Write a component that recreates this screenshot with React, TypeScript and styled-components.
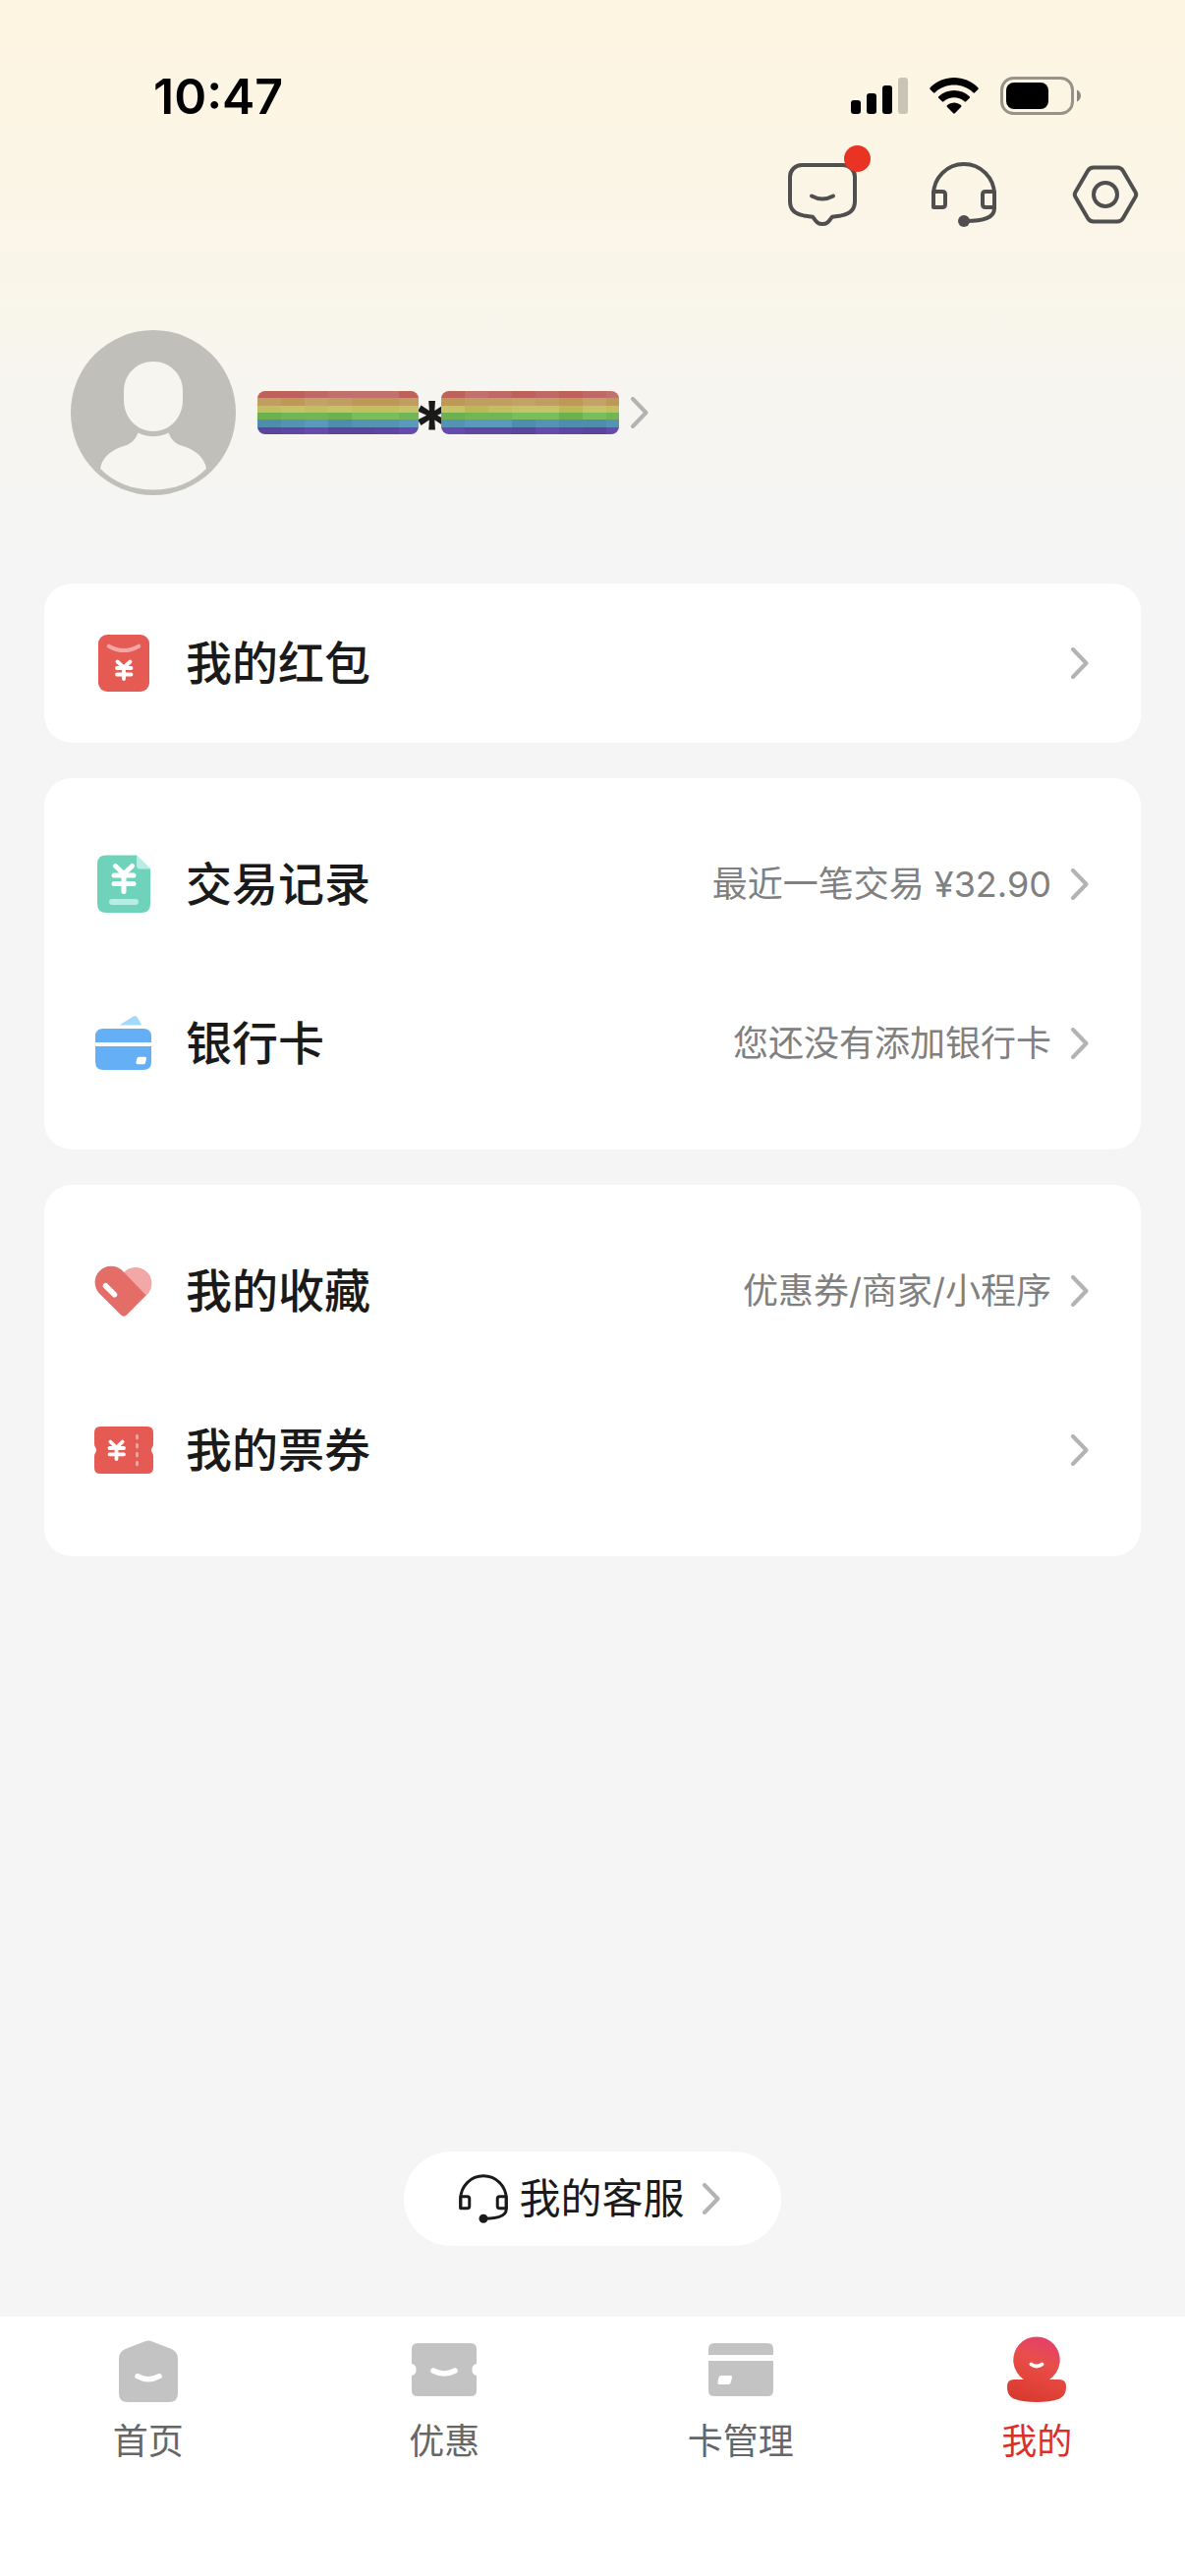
import React from "react";
import styled, { createGlobalStyle } from "styled-components";

const GlobalStyle = createGlobalStyle`
  *, *::before, *::after { box-sizing: border-box; }
  html, body { margin: 0; padding: 0; }
  body {
    background: #f5f5f5;
    font-family: Inter, "Noto Sans CJK SC", sans-serif;
    color: #1a1a1a;
  }
  a { color: inherit; text-decoration: none; }
  button { font: inherit; color: inherit; border: 0; background: none; padding: 0; cursor: pointer; }
  svg { display: block; flex: none; }
`;

const Page = styled.div`
  display: flex;
  flex-direction: column;
  min-height: 100vh;
  background: linear-gradient(180deg, #fef5e1 0, #f9f6ea 300px, #f7f5f0 400px, #f5f5f5 570px);
`;

const StatusBar = styled.div`
  display: flex;
  align-items: center;
  justify-content: space-between;
  padding: 62px 105px 28px 156px;
`;

const Clock = styled.time`
  font-size: 50px;
  line-height: 72px;
  font-weight: 600;
  color: #000;
`;

const StatusIcons = styled.div`
  display: flex;
  align-items: center;
  gap: 22px;
`;

const Toolbar = styled.header`
  display: flex;
  justify-content: flex-end;
  gap: 72px;
  padding: 0 45px;
`;

const ToolButton = styled.button`
  position: relative;
  width: 72px;
  height: 72px;
  color: #4f4f4f;
`;

const Dot = styled.span`
  position: absolute;
  top: -14px;
  right: -13px;
  width: 27px;
  height: 27px;
  border-radius: 50%;
  background: #e93323;
`;

const Profile = styled.a`
  display: flex;
  align-items: center;
  align-self: flex-start;
  gap: 22px;
  margin: 102px 72px 90px;
`;

const NameLine = styled.span`
  display: flex;
  align-items: center;
  gap: 12px;
`;

const MaskedName = styled.span`
  display: flex;
  align-items: flex-end;

  svg { z-index: 1; }
`;

const Star = styled.span`
  display: flex;
  justify-content: center;
  width: 23px;
  height: 44px;
  padding-left: 4px;
  font-size: 72px;
  line-height: 72px;
  font-weight: 700;
`;

const Main = styled.main`
  display: flex;
  flex-direction: column;
  gap: 36px;
  padding: 0 45px;
`;

const Card = styled.section<{ $roomy?: boolean }>`
  padding: ${(p) => (p.$roomy ? "27px 0" : "0")};
  border-radius: 28px;
  background: #fff;
`;

const Row = styled.a`
  display: flex;
  align-items: center;
  height: 162px;
  padding: 0 53px 0 51px;
`;

const RowTitle = styled.span`
  flex: 1;
  margin-left: 33px;
  font-size: 47px;
  line-height: 66px;
  font-weight: 500;
`;

const RowNote = styled.span`
  margin-right: 20px;
  font-size: 36px;
  line-height: 50px;
  color: #808080;
`;

const ServiceButton = styled.button`
  display: flex;
  align-items: center;
  align-self: center;
  height: 96px;
  margin: auto 0 72px;
  padding: 0 62px 0 54px;
  border-radius: 48px;
  background: #fff;
`;

const ServiceText = styled.span`
  margin: 0 18px 0 9px;
  font-size: 42px;
  line-height: 60px;
`;

const TabBar = styled.nav`
  display: grid;
  grid-template-columns: repeat(4, 1fr);
  height: 264px;
  padding-top: 18px;
  background: #fff;
`;

const Tab = styled.a<{ $active?: boolean }>`
  display: flex;
  flex-direction: column;
  align-items: center;
  gap: 12px;
  font-size: 36px;
  line-height: 50px;
  color: ${(p) => (p.$active ? "#d9302a" : "#666")};
`;

const Chevron = () => (
  <svg width="18" height="32" viewBox="0 0 18 32" fill="none" stroke="#b3b3b3" strokeWidth="4" strokeLinecap="round" strokeLinejoin="round">
    <path d="M2 2 15.5 16 2 30" />
  </svg>
);

const Signal = () => (
  <svg width="58" height="38" viewBox="0 0 58 38">
    <rect x="0" y="23" width="10" height="14" rx="3" />
    <rect x="16" y="16" width="10" height="21" rx="3" />
    <rect x="32" y="8" width="10" height="29" rx="3" />
    <rect x="48" y="0" width="10" height="37" rx="3" opacity="0.2" />
  </svg>
);

const Wifi = () => (
  <svg width="50" height="38" viewBox="0 0 50 38">
    <path d="M0.6 10.2C14 -3.4 36 -3.4 49.4 10.2Q50.2 11 49.4 11.9L46 15.3Q45.2 16 44.4 15.2C33.6 5 16.4 5 5.6 15.2Q4.8 16 4 15.3L0.6 11.9Q-0.2 11 0.6 10.2Z" />
    <path d="M9.2 19.2C18 10.8 32 10.8 40.8 19.2Q41.6 20 40.8 20.8L37.2 24.3Q36.4 25 35.6 24.3C29.6 19 20.4 19 14.4 24.3Q13.6 25 12.8 24.3L9.2 20.8Q8.4 20 9.2 19.2Z" />
    <path d="M18 28C22 24.6 28 24.6 32 28Q33 29 32 30L25.8 36.3Q25 37 24.2 36.3L18 30Q17 29 18 28Z" />
  </svg>
);

const Battery = () => (
  <svg width="83" height="40" viewBox="0 0 83 40">
    <rect x="1.5" y="1.5" width="72" height="36" rx="12" fill="none" stroke="#000" strokeOpacity="0.4" strokeWidth="3" />
    <rect x="6" y="6" width="43" height="27" rx="8" />
    <path d="M78 13.5C83.3 15.5 83.3 23.5 78 25.5Z" opacity="0.45" />
  </svg>
);

const MessageIcon = () => (
  <svg width="72" height="72" viewBox="0 0 72 72" fill="none" stroke="currentColor" strokeWidth="4" strokeLinecap="round" strokeLinejoin="round">
    <path d="M15 6H57A12 12 0 0 1 69 18V43C69 52 63 56 55 57.4L46 58.7C42 64.5 40 66 36 66C32 66 30 64.5 26 58.7L17 57.4C9 56 3 52 3 43V18A12 12 0 0 1 15 6Z" />
    <path d="M25 37.5Q36 43.5 47 37.5" />
  </svg>
);

const HeadsetIcon = ({ size }: { size: number }) => (
  <svg width={size} height={size} viewBox="0 0 72 72" fill="none" stroke="currentColor" strokeWidth="4" strokeLinejoin="round">
    <path d="M5 49V36A31 31 0 0 1 67 36V50C67 60 56 63 38 63" />
    <path d="M5 33H14Q17 33 17 36V46Q17 49 14 49H5Z" />
    <path d="M67 33H58Q55 33 55 36V46Q55 49 58 49H67Z" />
    <circle cx="36" cy="63" r="6" fill="currentColor" stroke="none" />
  </svg>
);

const SettingsIcon = () => (
  <svg width="72" height="72" viewBox="0 0 72 72" fill="none" stroke="currentColor" strokeWidth="4" strokeLinejoin="round">
    <path d="M24 8.5H48Q52 8.5 54 12L66.5 33.5Q68 36 66.5 38.5L54 60Q52 63.5 48 63.5H24Q20 63.5 18 60L5.5 38.5Q4 36 5.5 33.5L18 12Q20 8.5 24 8.5Z" />
    <circle cx="36" cy="36" r="12" />
  </svg>
);

const Avatar = () => (
  <svg width="168" height="168" viewBox="0 0 168 168">
    <circle cx="84" cy="84" r="84" fill="#c0bfba" />
    <path d="M84 32C101 32 114 45 114 62V71C114 89 101 103 84 103C67 103 54 89 54 71V62C54 45 67 32 84 32Z" fill="#f7f5ef" />
    <path d="M68.5 104.5Q84 112 99.5 104.5C102 111 106 115 111 117C126 121 136 129 138 141C124 155 106 162.5 84 162.5C62 162.5 44 155 30 141C32 129 42 121 57 117C62 115 66 111 68.5 104.5Z" fill="#f7f5ef" />
  </svg>
);

const stripes = [
  ["#bc625b", "#be6a64", "#c1716c"],
  ["#bd9856", "#c09d60", "#c3a268"],
  ["#bbb856", "#c2bf60", "#c6c268"],
  ["#6cb050", "#72b556", "#7abe5c"],
  ["#508cae", "#5692b3", "#5a99bd"],
  ["#5c439e", "#6046a3", "#664aad"],
];

const MaskBar = ({ width, shades }: { width: number; shades: string[] }) => (
  <svg width={width} height="44" viewBox={`0 0 ${width} 45`} preserveAspectRatio="none">
    <clipPath id={`mask-${width}`}>
      <rect width={width} height="45" rx="8" />
    </clipPath>
    <g clipPath={`url(#mask-${width})`} shapeRendering="crispEdges">
      {stripes.map((tones, r) =>
        shades[r].split("").map((s, c) => (
          <rect key={`${r}-${c}`} x={c * 24} y={r * 7.5} width="24" height="7.5" fill={tones[Number(s)]} />
        ))
      )}
    </g>
  </svg>
);

const Yen = ({ d, w }: { d: string; w: number }) => (
  <path d={d} fill="none" stroke="#fff" strokeWidth={w} strokeLinecap="round" strokeLinejoin="round" />
);

const RedPacketIcon = () => (
  <svg width="60" height="60" viewBox="0 0 60 60">
    <rect x="4" y="1" width="52" height="58" rx="9" fill="#e55b54" />
    <path d="M14.7 12.7Q30 21.5 45.3 12.7" fill="none" stroke="#f2a6a6" strokeWidth="4" strokeLinecap="round" />
    <Yen w={3.8} d="M23.5 28.5 30 34.5 36.5 28.5M23 35H37.5M23 41.5H37.5M30 35V46" />
  </svg>
);

const RecordIcon = () => (
  <svg width="60" height="60" viewBox="0 0 60 60">
    <path d="M12 0.5H43L57 14.5V50Q57 59 48 59H12Q3 59 3 50V9.5Q3 0.5 12 0.5Z" fill="#6fd2ba" />
    <path d="M43 0.5 57 14.5H46Q43 14.5 43 11.5Z" fill="#b9ece5" />
    <path d="M18 48H42" stroke="#b9ece5" strokeWidth="6" strokeLinecap="round" />
    <Yen w={5} d="M21.5 11.5 30 19.5 38.5 11.5M20 21H40M20 29.5H40M30 20V37.5" />
  </svg>
);

const BankCardIcon = () => (
  <svg width="60" height="60" viewBox="0 0 60 60">
    <path d="M25.5 11.5 39.5 2.5Q42.3 1 44 3.8L48.3 11.5Z" fill="#a4d9fb" />
    <path d="M1 29V23Q1 15 9 15H50Q58 15 58 23V29Z" fill="#64aff6" />
    <path d="M1 33H58V49Q58 57 50 57H9Q1 57 1 49Z" fill="#64aff6" />
    <path d="M45.5 43.7H51.5Q53.4 43.7 53 45.5L52 49.8Q51.7 51.3 50 51.3H44Q42 51.3 42.4 49.5L43.3 45.5Q43.7 43.7 45.5 43.7Z" fill="#fff" />
  </svg>
);

const HeartIcon = () => (
  <svg width="60" height="60" viewBox="0 0 60 60">
    <path d="M30 11A16.5 16.5 0 0 1 55.2 32.2L52.7 34.7L30 30Z" fill="#f2a8a7" />
    <path d="M4.8 32.2A16.5 16.5 0 0 1 28.2 9L52.7 34.4L32.6 54.7Q30 57 27.4 54.7Z" fill="#e46d67" />
    <path d="M11.5 24.7 20.5 33.7" stroke="#fff" strokeWidth="5.5" strokeLinecap="round" />
  </svg>
);

const CouponIcon = () => (
  <svg width="60" height="60" viewBox="0 0 60 60">
    <path d="M6 6H54Q60 6 60 12V24Q60 26 58.5 28Q57.2 30 58.5 32Q60 34 60 36V48Q60 54 54 54H6Q0 54 0 48V36Q0 34 1.5 32Q2.8 30 1.5 28Q0 26 0 24V12Q0 6 6 6Z" fill="#e55b54" />
    <path d="M43.5 15.3V18M43.5 24.3V27M43.5 33.3V36M43.5 42.3V45" stroke="#f2a6a6" strokeWidth="2.8" strokeLinecap="round" />
    <Yen w={3.8} d="M16.3 21.5 22.5 27.5 28.7 21.5M15.5 28H30M15.5 34.3H30M22.5 28V39" />
  </svg>
);

const HomeIcon = () => (
  <svg width="72" height="72" viewBox="0 0 72 72">
    <path d="M33 7Q36 5.8 39 7L59 14.7Q66 17.5 66 25V60Q66 69 57 69H15Q6 69 6 60V25Q6 17.5 13 14.7Z" fill="#c3c3c3" />
    <path d="M25 42.7Q36 48.7 47 42.7" fill="none" stroke="#fff" strokeWidth="5.5" strokeLinecap="round" />
  </svg>
);

const OffersIcon = () => (
  <svg width="72" height="72" viewBox="0 0 72 72">
    <path d="M9 9H63Q69 9 69 15V30A6.2 6.2 0 0 0 69 42V57Q69 63 63 63H9Q3 63 3 57V42A6.2 6.2 0 0 0 3 30V15Q3 9 9 9Z" fill="#c3c3c3" />
    <path d="M25 37Q36 43 47 37" fill="none" stroke="#fff" strokeWidth="5.5" strokeLinecap="round" />
  </svg>
);

const CardsIcon = () => (
  <svg width="72" height="72" viewBox="0 0 72 72">
    <path d="M3 21V15Q3 9 9 9H63Q69 9 69 15V21Z" fill="#c3c3c3" />
    <path d="M3 27H69V57Q69 63 63 63H9Q3 63 3 57Z" fill="#c3c3c3" />
    <path d="M16 42H25.5Q27.4 42 27 44L25.7 49.3Q25.3 51 23.5 51H14Q12 51 12.4 49L13.5 43.7Q14 42 16 42Z" fill="#fff" />
  </svg>
);

const MineIcon = () => (
  <svg width="72" height="72" viewBox="0 0 72 72">
    <defs>
      <linearGradient id="mine" x1="52" y1="6" x2="30" y2="69" gradientUnits="userSpaceOnUse">
        <stop offset="0" stopColor="#e4406a" />
        <stop offset="0.35" stopColor="#e84e4c" />
        <stop offset="0.65" stopColor="#e3453c" />
        <stop offset="1" stopColor="#d93a30" />
      </linearGradient>
    </defs>
    <path d="M23 46A23.7 23.7 0 1 1 49 46H59Q66 46 66 53C66 61 63 64 58 66Q50 69 36 69Q22 69 14 66C9 64 6 61 6 53Q6 46 13 46Z" fill="url(#mine)" />
    <path d="M30.5 30.5Q36 34.5 41.5 30.5" fill="none" stroke="#fff" strokeWidth="4" strokeLinecap="round" />
  </svg>
);

type Item = { title: string; note?: string; icon: React.ReactNode };

const groups: Item[][] = [
  [{ title: "我的红包", icon: <RedPacketIcon /> }],
  [
    { title: "交易记录", note: "最近一笔交易 ¥32.90", icon: <RecordIcon /> },
    { title: "银行卡", note: "您还没有添加银行卡", icon: <BankCardIcon /> },
  ],
  [
    { title: "我的收藏", note: "优惠券/商家/小程序", icon: <HeartIcon /> },
    { title: "我的票券", icon: <CouponIcon /> },
  ],
];

const tabs = [
  { title: "首页", icon: <HomeIcon /> },
  { title: "优惠", icon: <OffersIcon /> },
  { title: "卡管理", icon: <CardsIcon /> },
  { title: "我的", icon: <MineIcon />, active: true },
];

export default function App() {
  return (
    <Page lang="zh-CN">
      <GlobalStyle />
      <StatusBar>
        <Clock>10:47</Clock>
        <StatusIcons>
          <Signal />
          <Wifi />
          <Battery />
        </StatusIcons>
      </StatusBar>
      <Toolbar>
        <ToolButton aria-label="消息">
          <MessageIcon />
          <Dot />
        </ToolButton>
        <ToolButton aria-label="客服">
          <HeadsetIcon size={72} />
        </ToolButton>
        <ToolButton aria-label="设置">
          <SettingsIcon />
        </ToolButton>
      </Toolbar>
      <Profile href="#profile">
        <Avatar />
        <NameLine>
          <MaskedName>
            <MaskBar width={164} shades={["0012220", "1021001", "1212112", "0110221", "0120112", "0120012"]} />
            <Star>*</Star>
            <MaskBar width={181} shades={["02101012", "01121020", "20122021", "01122021", "12201001", "21102102"]} />
          </MaskedName>
          <Chevron />
        </NameLine>
      </Profile>
      <Main>
        {groups.map((items, i) => (
          <Card key={i} $roomy={items.length > 1}>
            {items.map((item) => (
              <Row key={item.title} href="#">
                {item.icon}
                <RowTitle>{item.title}</RowTitle>
                {item.note && <RowNote>{item.note}</RowNote>}
                <Chevron />
              </Row>
            ))}
          </Card>
        ))}
      </Main>
      <ServiceButton>
        <HeadsetIcon size={54} />
        <ServiceText>我的客服</ServiceText>
        <Chevron />
      </ServiceButton>
      <TabBar>
        {tabs.map((tab) => (
          <Tab key={tab.title} href="#" $active={tab.active} aria-current={tab.active ? "page" : undefined}>
            {tab.icon}
            {tab.title}
          </Tab>
        ))}
      </TabBar>
    </Page>
  );
}
